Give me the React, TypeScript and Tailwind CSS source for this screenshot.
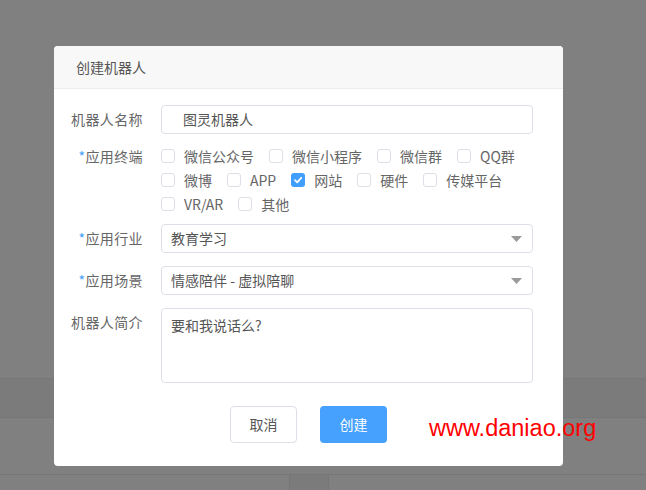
import React from "react";

const font = { fontFamily: '"Microsoft YaHei", "Noto Sans CJK SC", sans-serif' };

const terminals = [
  { name: "微信公众号", checked: false },
  { name: "微信小程序", checked: false },
  { name: "微信群", checked: false },
  { name: "QQ群", checked: false },
  { name: "微博", checked: false },
  { name: "APP", checked: false },
  { name: "网站", checked: true },
  { name: "硬件", checked: false },
  { name: "传媒平台", checked: false },
  { name: "VR/AR", checked: false },
  { name: "其他", checked: false },
];

function Checkbox({ checked }: { checked: boolean }) {
  if (checked) {
    return (
      <span className="flex h-[14px] w-[14px] items-center justify-center rounded-[3px] bg-[#409eff]">
        <svg width="10" height="10" viewBox="0 0 10 10" fill="none">
          <path d="M2 5.2 L4.2 7.3 L8.2 2.8" stroke="white" strokeWidth="1.8" strokeLinecap="round" strokeLinejoin="round" />
        </svg>
      </span>
    );
  }
  return <span className="h-[14px] w-[14px] rounded-[3px] border border-[#dcdfe6] bg-white" />;
}

function Label({ text, required, className = "" }: { text: string; required?: boolean; className?: string }) {
  return (
    <div className={`w-[89px] shrink-0 text-right text-[14px] tracking-[0.4px] text-[#666] ${className}`}>
      {required && <span className="text-[#409eff]">*</span>}
      {text}
    </div>
  );
}

function Select({ value }: { value: string }) {
  return (
    <div className="flex h-[29px] flex-1 items-center justify-between rounded-[4px] border border-[#dcdfe6] pl-[9px] pr-[10px] text-[14px] text-[#555]">
      <span>{value}</span>
      <svg width="11" height="6" viewBox="0 0 11 6">
        <path d="M0 0 H11 L5.5 6 Z" fill="#9a9a9a" />
      </svg>
    </div>
  );
}

export default function App() {
  return (
    <div className="relative h-[490px] w-[646px] overflow-hidden bg-[#808080]" style={font}>
      {/* page behind the overlay */}
      <div className="flex h-full flex-col">
        <div className="h-[378px]" />
        <div className="h-[40px] border-y border-[#767676] bg-[#7b7b7b]" />
        <div className="relative h-[57px] border-b border-[#767676]" />
        <div className="flex flex-1">
          <div className="w-[289px]" />
          <div className="w-[40px] border-x border-[#767676] bg-[#7b7b7b]" />
        </div>
      </div>

      {/* dialog */}
      <div className="absolute left-[54px] top-[46px] flex h-[420px] w-[509px] flex-col overflow-hidden rounded-[4px] bg-white">
        <div className="flex h-[43px] items-center border-b border-[#ececec] bg-[#f8f8f8] pl-[22px] text-[14px] text-[#555]">
          创建机器人
        </div>

        <div className="flex flex-col pr-[30px]">
          <div className="mt-[16px] flex items-center gap-[18px]">
            <Label text="机器人名称" className="leading-[29px]" />
            <div className="flex h-[29px] flex-1 items-center rounded-[4px] border border-[#dcdfe6] pl-[21px] text-[14px] text-[#555]">
              图灵机器人
            </div>
          </div>

          <div className="mt-[10px] flex items-start gap-[18px]">
            <Label text="应用终端" required className="leading-[24px]" />
            <div className="flex flex-1 flex-wrap text-[14px] leading-[24px] text-[#666]">
              {terminals.map((t) => (
                <label key={t.name} className="mr-[15px] flex h-[24px] items-center gap-[9px]">
                  <Checkbox checked={t.checked} />
                  <span>{t.name}</span>
                </label>
              ))}
            </div>
          </div>

          <div className="mt-[8px] flex items-center gap-[18px]">
            <Label text="应用行业" required className="leading-[29px]" />
            <Select value="教育学习" />
          </div>

          <div className="mt-[13px] flex items-center gap-[18px]">
            <Label text="应用场景" required className="leading-[29px]" />
            <Select value="情感陪伴 - 虚拟陪聊" />
          </div>

          <div className="mt-[13px] flex items-start gap-[18px]">
            <Label text="机器人简介" className="leading-[29px]" />
            <div className="h-[75px] flex-1 rounded-[4px] border border-[#dcdfe6] pl-[9px] pt-[6px] text-[14px] leading-[20px] text-[#555]">
              要和我说话么?
            </div>
          </div>
        </div>

        <div className="mt-[23px] flex justify-center gap-[23px]">
          <button className="h-[37px] w-[67px] rounded-[4px] border border-[#dcdfe6] bg-white text-[14px] text-[#555]">
            取消
          </button>
          <button className="h-[37px] w-[67px] rounded-[4px] bg-[#45a1fd] text-[14px] text-white">
            创建
          </button>
        </div>
      </div>

      <div
        className="absolute left-[429px] top-[413px] text-[23.5px] leading-[30px] text-[#ff0000]"
        style={{ fontFamily: '"Liberation Sans", Arial, sans-serif' }}
      >
        www.daniao.org
      </div>
    </div>
  );
}
